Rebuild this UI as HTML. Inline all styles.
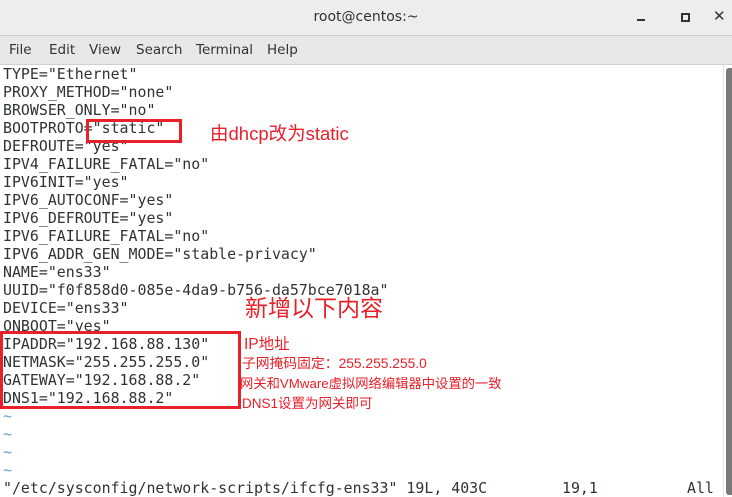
<!DOCTYPE html>
<html><head><style>
body{margin:0;width:732px;height:497px;overflow:hidden;background:#fff;position:relative;font-family:"DejaVu Sans",sans-serif}
.title{position:absolute;left:0;top:0;width:732px;height:35px;background:#ededed;border-bottom:1px solid #cfcfcf}
.title .t{position:absolute;left:0;width:732px;top:9px;text-align:center;font-size:14px;color:#2e3436}
.menu{position:absolute;left:0;top:36px;width:732px;height:28px;background:#e8e8e8;border-bottom:1px solid #d0d0d0;font-size:13.5px;color:#2e3436}
.menu span{position:absolute;top:6px}
pre{position:absolute;left:3px;top:65px;margin:0;font-family:"DejaVu Sans Mono",monospace;font-size:14.9px;line-height:18px;color:#2e3436}
.tl{color:#6f9bc6}
.box{position:absolute;border:3px solid #e8202a;box-sizing:border-box}
.r{position:absolute;color:#e8202a;font-family:"Liberation Sans","Noto Sans CJK SC",sans-serif;white-space:nowrap}
.sb{position:absolute;left:726px;top:68px;width:6px;height:427px;background:#7a7a7a;border-radius:3px 0 0 3px}
.sbl{position:absolute;left:723px;top:65px;width:1px;height:432px;background:#e6e6e6}
.st{position:absolute;top:479px;font-family:"DejaVu Sans Mono",monospace;font-size:14.9px;line-height:18px;color:#2e3436;white-space:pre}
</style></head><body>
<div class="title"><div class="t">root@centos:~</div>
<div style="position:absolute;left:637px;top:19px;width:8px;height:2px;background:#2e3436"></div>
<div style="position:absolute;left:681px;top:13px;width:5px;height:5px;border:2px solid #2e3436"></div>
<div style="position:absolute;left:713px;top:7px;font-size:15px;font-weight:bold;color:#2e3436">✕</div>
</div>
<div class="menu"><span style="left:9px">File</span><span style="left:49px">Edit</span><span style="left:89px">View</span><span style="left:136px">Search</span><span style="left:196px">Terminal</span><span style="left:267px">Help</span></div>
<pre>TYPE="Ethernet"
PROXY_METHOD="none"
BROWSER_ONLY="no"
BOOTPROTO="static"
DEFROUTE="yes"
IPV4_FAILURE_FATAL="no"
IPV6INIT="yes"
IPV6_AUTOCONF="yes"
IPV6_DEFROUTE="yes"
IPV6_FAILURE_FATAL="no"
IPV6_ADDR_GEN_MODE="stable-privacy"
NAME="ens33"
UUID="f0f858d0-085e-4da9-b756-da57bce7018a"
DEVICE="ens33"
ONBOOT="yes"
IPADDR="192.168.88.130"
NETMASK="255.255.255.0"
GATEWAY="192.168.88.2"
DNS1="192.168.88.2"
<span class="tl">~</span>
<span class="tl">~</span>
<span class="tl">~</span>
<span class="tl">~</span></pre>
<div class="st" style="left:3px">"/etc/sysconfig/network-scripts/ifcfg-ens33" 19L, 403C</div>
<div class="st" style="left:562px">19,1</div>
<div class="st" style="left:687px">All</div>
<div class="box" style="left:86px;top:119px;width:96px;height:24px"></div>
<div class="box" style="left:0;top:331px;width:241px;height:78px"></div>
<div class="r" style="left:210px;top:120px;font-size:18.5px">由dhcp改为static</div>
<div class="r" style="left:245px;top:289px;font-size:23px">新增以下内容</div>
<div class="r" style="left:244px;top:332px;font-size:15.5px">IP地址</div>
<div class="r" style="left:242px;top:352px;font-size:13.8px">子网掩码固定：255.255.255.0</div>
<div class="r" style="left:240px;top:373px;font-size:13.3px">网关和VMware虚拟网络编辑器中设置的一致</div>
<div class="r" style="left:242px;top:392px;font-size:13.5px">DNS1设置为网关即可</div>
<div class="sbl"></div><div class="sb"></div>
</body></html>
